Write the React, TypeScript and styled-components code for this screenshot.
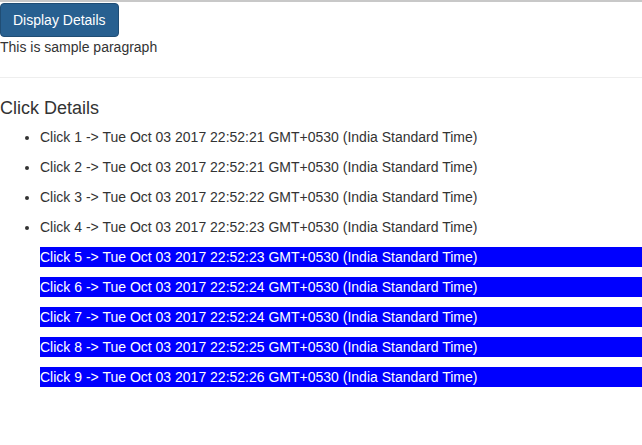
import styled, { createGlobalStyle } from "styled-components";

const clicks = [
  { n: 1, time: "22:52:21", active: false },
  { n: 2, time: "22:52:21", active: false },
  { n: 3, time: "22:52:22", active: false },
  { n: 4, time: "22:52:23", active: false },
  { n: 5, time: "22:52:23", active: true },
  { n: 6, time: "22:52:24", active: true },
  { n: 7, time: "22:52:24", active: true },
  { n: 8, time: "22:52:25", active: true },
  { n: 9, time: "22:52:26", active: true },
];

const GlobalStyle = createGlobalStyle`
  html, body {
    margin: 0;
    background: #fff;
  }
  body {
    border-top: 2px solid #c8c8c8;
    font-family: "Liberation Sans", Arial, sans-serif;
    font-size: 14px;
    line-height: 20px;
    color: #333;
  }
`;

const Page = styled.div`
  display: flex;
  flex-direction: column;
`;

const Button = styled.button`
  align-self: flex-start;
  margin-top: 1px;
  padding: 6px 12px;
  font-family: inherit;
  font-size: 14px;
  line-height: 20px;
  color: #fff;
  background: #286090;
  border: 1px solid #204d74;
  border-radius: 4px;
  cursor: pointer;
`;

const Paragraph = styled.p`
  margin: 0;
`;

const Rule = styled.hr`
  margin: 20px 0;
  border: 0;
  border-top: 1px solid #eee;
`;

const Heading = styled.h4`
  margin: 0 0 9px;
  font-size: 18px;
  font-weight: 500;
  line-height: 20px;
`;

const List = styled.ul`
  margin: 0;
  padding-left: 40px;
  display: flex;
  flex-direction: column;
  gap: 10px;
`;

const Item = styled.li<{ $active?: boolean }>`
  line-height: 20px;
  list-style: ${(p) => (p.$active ? "none" : "disc")};
  background: ${(p) => (p.$active ? "#0000ff" : "transparent")};
  color: ${(p) => (p.$active ? "#fff" : "#333")};
`;

export default function App() {
  return (
    <Page>
      <GlobalStyle />
      <Button>Display Details</Button>
      <Paragraph>This is sample paragraph</Paragraph>
      <Rule />
      <Heading>Click Details</Heading>
      <List>
        {clicks.map((c) => (
          <Item key={c.n} $active={c.active}>
            Click {c.n} -&gt; Tue Oct 03 2017 {c.time} GMT+0530 (India Standard Time)
          </Item>
        ))}
      </List>
    </Page>
  );
}
